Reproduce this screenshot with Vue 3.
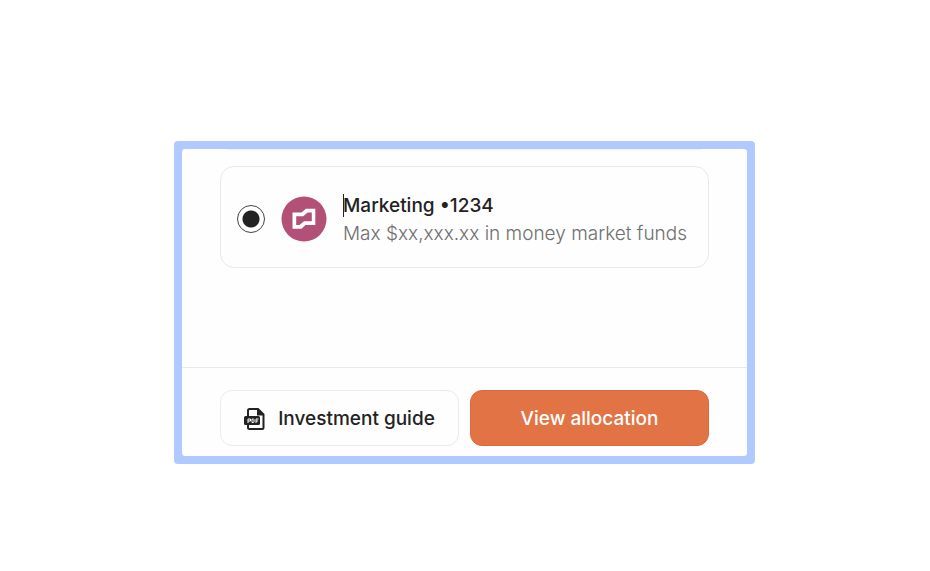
<script setup>
import { ref } from 'vue'

const account = ref('marketing')
</script>

<template>
  <main class="stage">
    <section class="frame">
      <form class="list" @submit.prevent>
        <div class="previous"></div>
        <label class="card" for="marketing">
          <input id="marketing" v-model="account" class="radio" type="radio" name="account" value="marketing" />
          <svg class="logo" viewBox="0 0 46 46" aria-hidden="true">
            <circle cx="23" cy="23" r="22.5" fill="#b25077" />
            <path
              fill="#fff"
              fill-rule="evenodd"
              d="M11.500 16.500H20.500L25 12.700H34.300V29H24.500L20.500 32.700H11.500ZM15.200 20.200V29H18.500L23 25.300H30.800V16.400H26.500L22.300 20.200Z"
            />
          </svg>
          <span class="copy">
            <span class="title">Marketing •1234</span>
            <span class="detail">Max $xx,xxx.xx in money market funds</span>
          </span>
        </label>
      </form>
      <footer class="actions">
        <button class="button" type="button">
          <svg class="pdf" viewBox="0 0 22 24" aria-hidden="true">
            <path d="M4 9V3.500Q4 2 5.500 2H14L19.500 7.500V20.500Q19.500 22 18 22H5.500Q4 22 4 20.500V18" fill="none" stroke="#222" stroke-width="2" />
            <path d="M13 1.500V8.500H20Z" fill="#222" />
            <rect x="0" y="9" width="16" height="9" rx="1.500" fill="#222" />
            <path d="M4 16V12H6.500V14H4M8 12V15.500H9.500L10 15V12.500L9.500 12ZM12 16V12H14.500M12 14H14" fill="none" stroke="#fff" stroke-width="1" />
          </svg>
          Investment guide
        </button>
        <button class="button primary" type="button">View allocation</button>
      </footer>
    </section>
  </main>
</template>

<style>
body {
  background: #fff;
}
</style>

<style scoped>
.stage {
  padding: 141px 175px 100px 174px;
  font-family: Inter, "Liberation Sans", sans-serif;
  font-size: 19px;
  line-height: 28px;
  color: #222;
}

.frame {
  border: 8px solid #b0c9ff;
  border-radius: 4px;
  background: #b0c9ff;
}

.list {
  padding: 0 38px 99px;
  background: #fefefe;
  border-radius: 3px 3px 0 0;
}

.previous {
  height: 1px;
  margin: 0 8px 16px;
  background: #f2f2f2;
}

.card {
  display: flex;
  align-items: center;
  gap: 16px;
  padding: 23px 8px 19px 16px;
  border: 1px solid #e9e9e9;
  border-radius: 14px;
}

.radio {
  appearance: none;
  flex: none;
  width: 28px;
  height: 28px;
  margin: 0;
  border: 1px solid #444;
  border-radius: 50%;
}

.radio:checked {
  background: radial-gradient(circle, #222 8px, transparent 9px);
}

.logo {
  flex: none;
  width: 46px;
  height: 46px;
}

.copy {
  display: flex;
  flex-direction: column;
  min-width: 0;
  padding-top: 2px;
}

.title {
  position: relative;
  font-weight: 500;
}

.title::before {
  content: "";
  position: absolute;
  left: 0;
  top: 2px;
  width: 1px;
  height: 23px;
  background: #222;
}

.detail {
  color: #6f6f6f;
  font-weight: 350;
}

.actions {
  display: grid;
  grid-template-columns: 1fr 1fr;
  gap: 11px;
  padding: 22px 38px 10px;
  border-top: 1px solid #e9e9e9;
  border-radius: 0 0 3px 3px;
  background: #fefefe;
}

.button {
  display: flex;
  align-items: center;
  justify-content: center;
  gap: 12px;
  height: 56px;
  padding: 1px 0 0;
  border: 1px solid #ebebeb;
  border-radius: 12px;
  background: #fefefe;
  color: #222;
  font: inherit;
  font-weight: 500;
}

.primary {
  border-color: #dc6a3c;
  background: #e27345;
  color: #fff;
}

.pdf {
  flex: none;
  width: 22px;
  height: 24px;
}
</style>
